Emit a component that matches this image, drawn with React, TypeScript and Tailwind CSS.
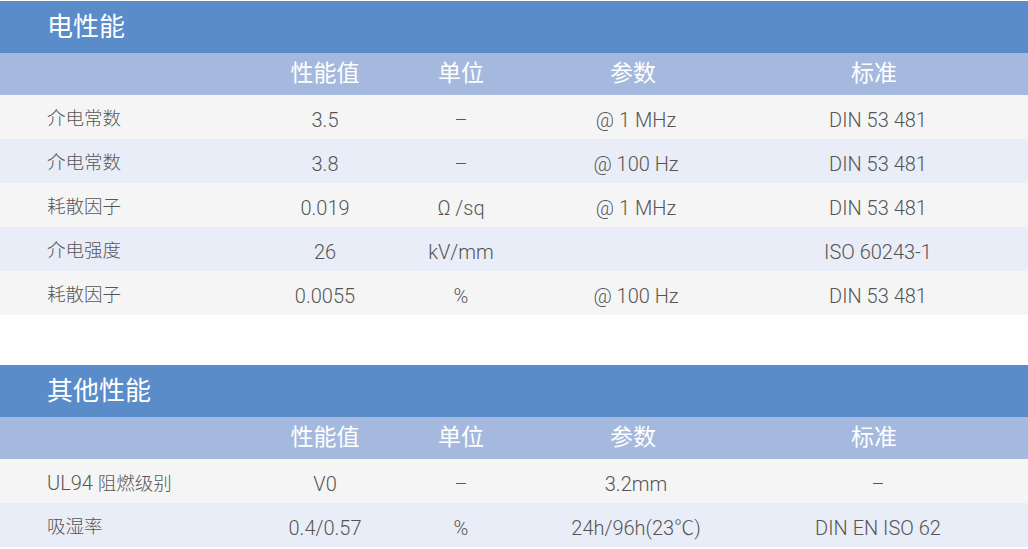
const font = { fontFamily: 'Roboto, "Noto Sans CJK SC", sans-serif' };

type Row = [string, string, string, string, string];

const electrical: Row[] = [
  ["介电常数", "3.5", "–", "@ 1 MHz", "DIN 53 481"],
  ["介电常数", "3.8", "–", "@ 100 Hz", "DIN 53 481"],
  ["耗散因子", "0.019", "Ω /sq", "@ 1 MHz", "DIN 53 481"],
  ["介电强度", "26", "kV/mm", "", "ISO 60243-1"],
  ["耗散因子", "0.0055", "%", "@ 100 Hz", "DIN 53 481"],
];

const other: Row[] = [
  ["UL94 阻燃级别", "V0", "–", "3.2mm", "–"],
  ["吸湿率", "0.4/0.57", "%", "24h/96h(23℃)", "DIN EN ISO 62"],
];

const cols = "grid grid-cols-[257px_136px_136px_208px_274px]";

// latin bits in the label column run a bit larger than the CJK
function Label({ text }: { text: string }) {
  const m = text.match(/^([A-Za-z0-9]+ )(.*)$/);
  if (!m) return <>{text}</>;
  return (
    <>
      <span className="text-[20px]">{m[1]}</span>
      {m[2]}
    </>
  );
}

function Section({ title, rows }: { title: string; rows: Row[] }) {
  return (
    <div>
      <div className="h-[52px] bg-[#5a8cc9] flex items-center pl-[47px]">
        <span className="text-[26px] text-white">{title}</span>
      </div>
      <div className={`${cols} h-[42px] bg-[#a5b9de] items-center text-white text-[23px]`}>
        <div />
        <div className="text-center">性能值</div>
        <div className="text-center">单位</div>
        <div className="text-center">参数</div>
        <div className="text-center">标准</div>
      </div>
      {rows.map((r, i) => (
        <div
          key={i}
          className={`${cols} h-[44px] items-center text-[20px] text-[#555] font-light ${
            i % 2 === 0 ? "bg-[#f5f5f5]" : "bg-[#e9edf7]"
          }`}
        >
          <div className="pl-[47px] pt-[5px] text-[18.5px]">
            <Label text={r[0]} />
          </div>
          <div className="text-center pt-[5px]">{r[1]}</div>
          <div className="text-center pt-[5px]">{r[2]}</div>
          <div className="text-center pt-[5px] pl-[6px]">{r[3]}</div>
          <div className="text-center pt-[5px] pl-[8px]">{r[4]}</div>
        </div>
      ))}
    </div>
  );
}

export default function App() {
  return (
    <div className="w-[1028px] h-[549px] bg-white overflow-hidden pt-px" style={font}>
      <Section title="电性能" rows={electrical} />
      <div className="h-[50px]" />
      <Section title="其他性能" rows={other} />
    </div>
  );
}
